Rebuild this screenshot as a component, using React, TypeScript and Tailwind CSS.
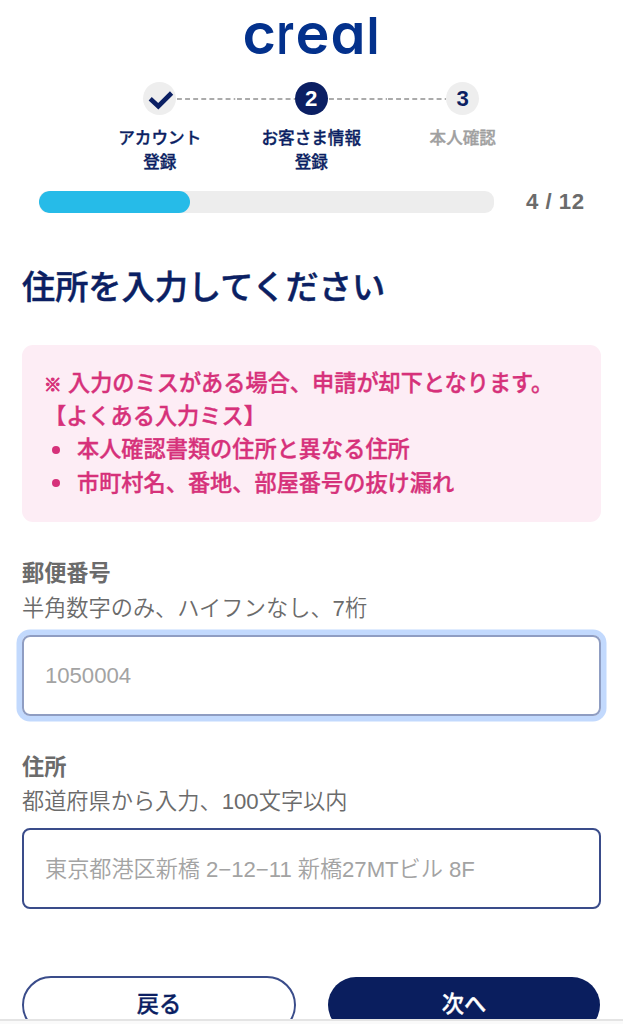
import clsx from "clsx";

interface Step {
  marker: string;
  label: string[];
  state: "done" | "current" | "upcoming";
}

const steps: Step[] = [
  { marker: "1", label: ["アカウント", "登録"], state: "done" },
  { marker: "2", label: ["お客さま情報", "登録"], state: "current" },
  { marker: "3", label: ["本人確認"], state: "upcoming" },
];

const currentPage = 4;
const totalPages = 12;

export default function App() {
  return (
    <div className="flex h-[1024px] w-[623px] flex-col overflow-hidden bg-white font-['Liberation_Sans','Noto_Sans_CJK_JP',sans-serif] text-[22.2px] leading-[33.3px] text-[#6b6b6b]">
      <main className="flex h-[1019px] shrink-0 flex-col overflow-hidden">
        <header className="flex h-[82px] shrink-0 justify-center">
          <Logo />
        </header>
        <Stepper />
        <ProgressBar />
        <div className="px-[22px]">
          <h1 className="mt-[50px] h-[50px] text-[33.2px] leading-[50px] font-medium text-[#0b1f63] [-webkit-text-stroke:0.5px]">
            住所を入力してください
          </h1>
          <Notice />
          <Field
            className="mt-[35px]"
            label="郵便番号"
            hint="半角数字のみ、ハイフンなし、7桁"
            placeholder="1050004"
            focused
          />
          <Field
            className="mt-[35px]"
            label="住所"
            hint="都道府県から入力、100文字以内"
            placeholder="東京都港区新橋 2−12−11 新橋27MTビル 8F"
          />
          <div className="mt-[67px] flex items-center gap-8 text-[#0b1f63] [-webkit-text-stroke:0.35px]">
            <button className="h-[58px] w-[274px] rounded-full border-2 border-[#3a4c8a] pb-0.5 font-medium">
              戻る
            </button>
            <button className="h-14 w-[272px] rounded-full bg-[#0a1e5e] pb-px font-medium text-white">
              次へ
            </button>
          </div>
        </div>
      </main>
      <div className="h-[5px] shrink-0 border-t-2 border-[#e4e4e4] bg-[#fafafa]" />
    </div>
  );
}

// width is the advance of each letter, so the wordmark keeps its wide bowls
const wordmark = [
  { char: "c", x: 0.5, width: 33.5, size: 57 },
  { char: "r", x: 34.5, width: 17.5, size: 57 },
  { char: "e", x: 53.5, width: 34, size: 57 },
  { char: "a", x: 88.5, width: 35, size: 57 },
  { char: "l", x: 124.5, width: 13, size: 51 },
];

function Logo() {
  return (
    <svg
      width="140"
      height="82"
      viewBox="0 0 140 82"
      className="font-['Inter',sans-serif] font-semibold [font-feature-settings:'cv11']"
      fill="#03318c"
    >
      {wordmark.map(({ char, x, width, size }) => (
        <text
          key={char}
          x={x}
          y="53.5"
          fontSize={size}
          textLength={width}
          lengthAdjust="spacingAndGlyphs"
        >
          {char}
        </text>
      ))}
    </svg>
  );
}

function Stepper() {
  return (
    <ol className="ml-[84px] flex h-[109px] shrink-0">
      {steps.map(({ marker, label, state }, i) => (
        <li key={marker} className="flex w-[151.5px] flex-col items-center">
          <div className="flex w-full items-center">
            <Connector visible={i > 0} />
            <div
              className={clsx(
                "flex size-[33px] shrink-0 items-center justify-center rounded-full font-bold",
                state === "current"
                  ? "bg-[#0b1f63] text-white"
                  : "bg-[#eeeeee] text-[#0b1f63]",
              )}
            >
              {state === "done" ? <Check /> : marker}
            </div>
            <Connector visible={i < steps.length - 1} />
          </div>
          <div
            className={clsx(
              "mt-3 text-center text-[16.6px] leading-[24px] font-medium [-webkit-text-stroke:0.35px]",
              state === "upcoming" ? "text-[#a0a0a0]" : "text-[#0b1f63]",
            )}
          >
            {label.map((line) => (
              <div key={line}>{line}</div>
            ))}
          </div>
        </li>
      ))}
    </ol>
  );
}

function Connector({ visible }: { visible: boolean }) {
  return (
    <svg className="h-[2px] min-w-0 flex-1">
      {visible && (
        <line
          x1="1"
          y1="1"
          x2="100%"
          y2="1"
          stroke="#ababab"
          strokeWidth="1.8"
          strokeDasharray="4.9 3.2"
        />
      )}
    </svg>
  );
}

function Check() {
  return (
    <svg width="33" height="33" viewBox="0 0 33 33" fill="none">
      <path
        d="M7.2 16.8L15.3 24.2L28.6 11"
        stroke="#0b1f63"
        strokeWidth="4.6"
      />
    </svg>
  );
}

function ProgressBar() {
  return (
    <div className="flex h-[22px] shrink-0 items-center pl-[38.5px]">
      <div className="h-[22px] w-[455px] overflow-hidden rounded-[9px] bg-[#ededed]">
        <div
          className="h-full rounded-full bg-[#26bbe8]"
          style={{ width: `${(currentPage / totalPages) * 100}%` }}
        />
      </div>
      <span className="ml-[32.5px] font-bold tracking-[0.5px] whitespace-nowrap">
        {currentPage} / {totalPages}
      </span>
    </div>
  );
}

function Notice() {
  return (
    <div className="mt-8 h-[177px] rounded-[11px] bg-[#fdedf5] p-[22px] font-medium text-[#d6317a] [-webkit-text-stroke:0.35px]">
      <p className="flex h-[33px]">
        <span className="mt-0.5 w-6 text-[17.5px] [-webkit-text-stroke:1px]">
          ※
        </span>
        入力のミスがある場合、申請が却下となります。
      </p>
      <p>【よくある入力ミス】</p>
      <ul>
        {[
          "本人確認書類の住所と異なる住所",
          "市町村名、番地、部屋番号の抜け漏れ",
        ].map((item) => (
          <li key={item} className="flex items-center">
            <span className="mr-[17px] ml-2 size-2 rounded-full bg-current" />
            {item}
          </li>
        ))}
      </ul>
    </div>
  );
}

interface FieldProps {
  label: string;
  hint: string;
  placeholder: string;
  focused?: boolean;
  className?: string;
}

function Field({ label, hint, placeholder, focused, className }: FieldProps) {
  return (
    <label className={clsx("block", className)}>
      <span className="block font-bold">{label}</span>
      <span className="mt-[1.5px] block font-[350]">{hint}</span>
      <input
        type="text"
        placeholder={placeholder}
        className={clsx(
          "mt-[9.5px] block h-[81px] w-full rounded-[8px] border-2 px-[21px] pt-0.5 font-[350] tracking-[-0.05px] placeholder:text-[#a3a3a3]",
          focused
            ? "border-[#8f9dc2] ring-[5.5px] ring-[#c2d9fd]"
            : "border-[#3a4c8a]",
        )}
      />
    </label>
  );
}
